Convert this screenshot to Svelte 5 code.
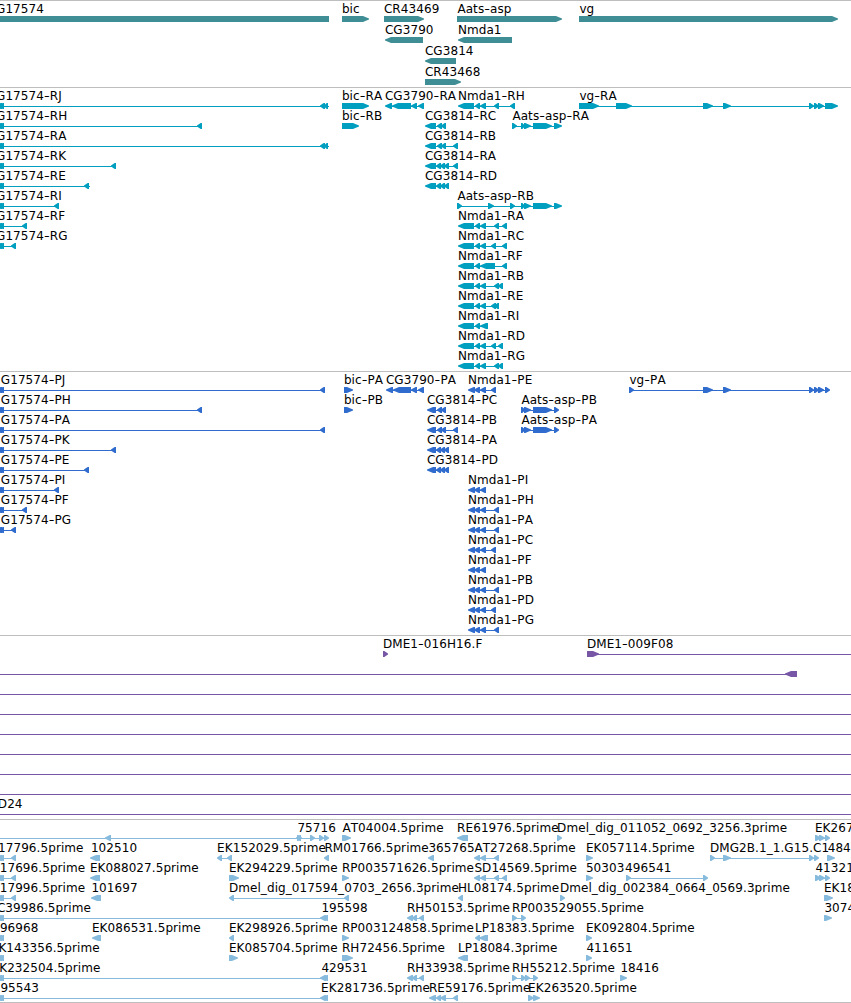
<script lang="ts">
    type Exon = [number, number];

    interface Feature {
        row: number;
        x: number;
        label: string;
        dir: number;
        exons: Exon[];
        line: Exon;
    }

    interface Track {
        name: string;
        color: string;
        height: number;
        pitch: number;
        features: Feature[];
    }

    // dir is 1 for the forward strand and -1 for the reverse strand
    const f = (row: number, x: number, label: string, dir: number, exons: Exon[], line?: Exon): Feature => ({
        row, x, label, dir, exons,
        line: line ?? [exons[0][0] + 1, exons[exons.length - 1][1] - 1]
    });

    const edge: Exon[] = [[-4, 2], [-1, 4]];
    const nmda: Exon[] = [[458, 474], [475, 480], [480, 486]];
    const nmdaP: Exon[] = [[468, 475], [474, 480], [480, 486]];
    const cg: Exon[] = [[425, 436], [437, 442], [441, 446]];
    const cgLong: Exon[] = [[425, 436], [436, 441], [440, 445], [444, 449]];
    const cgP: Exon[] = [[427, 436], [437, 442], [441, 446]];
    const cgPLong: Exon[] = [[427, 436], [436, 441], [440, 445], [444, 449]];
    const aats: Exon[] = [[521, 525], [524, 531], [533, 552]];
    const vgTail: Exon[] = [[703, 713], [723, 731], [809, 814], [814, 819], [818, 824]];
    const farEnd: Exon[] = [[320, 326], [324, 328]];

    const tracks: Track[] = [
        {
            name: "genes", color: "#408e95", height: 87, pitch: 21,
            features: [
                f(0, -4.4, "G17574", -1, [[-10, 329]]),
                f(0, 341.5, "bic", 1, [[342, 369]]),
                f(0, 383.5, "CR43469", 1, [[384, 424]]),
                f(0, 457, "Aats-asp", 1, [[457, 562]]),
                f(0, 579, "vg", 1, [[579, 838]]),
                f(1, 384.5, "CG3790", -1, [[385, 423]]),
                f(1, 457.5, "Nmda1", -1, [[458, 512]]),
                f(2, 424.5, "CG3814", -1, [[425, 456]]),
                f(3, 424.5, "CR43468", 1, [[425, 461]])
            ]
        },
        {
            name: "transcripts", color: "#009fbf", height: 284, pitch: 20,
            features: [
                f(0, -4.4, "G17574-RJ", -1, [...edge, [320, 325], [324, 328]], [0, 329]),
                f(1, -4.4, "G17574-RH", -1, [...edge, [197, 202]]),
                f(2, -4.4, "G17574-RA", -1, [...edge, [320, 325], [324, 328]], [0, 329]),
                f(3, -4.4, "G17574-RK", -1, [...edge, [111, 116]]),
                f(4, -4.4, "G17574-RE", -1, [...edge, [84, 89]], [0, 90]),
                f(5, -4.4, "G17574-RI", -1, [...edge, [54, 59]]),
                f(6, -4.4, "G17574-RF", -1, [...edge, [22, 27]]),
                f(7, -4.4, "G17574-RG", -1, [...edge, [11, 16]]),
                f(0, 341.5, "bic-RA", 1, [[342, 369]]),
                f(1, 341.5, "bic-RB", 1, [[342, 359]]),
                f(0, 384.5, "CG3790-RA", -1, [[385, 392], [392, 411], [411, 417], [418, 424]]),
                f(0, 457.5, "Nmda1-RH", -1, [...nmda, [494, 499], [510, 515]]),
                f(1, 424.5, "CG3814-RC", -1, cg),
                f(2, 424.5, "CG3814-RB", -1, [...cg, [453, 458]]),
                f(3, 424.5, "CG3814-RA", -1, [...cgLong, [453, 458]]),
                f(4, 424.5, "CG3814-RD", -1, cgLong),
                f(1, 512, "Aats-asp-RA", 1, [[512, 517], ...aats, [554, 562]]),
                f(0, 579, "vg-RA", 1, [[579, 599], [616, 632], ...vgTail, [825, 838]]),
                f(5, 457, "Aats-asp-RB", 1, [[457, 462], [488, 494], [510, 515], ...aats, [554, 562]]),
                f(6, 457.5, "Nmda1-RA", -1, [...nmda, [494, 499], [502, 507]]),
                f(7, 457.5, "Nmda1-RC", -1, [...nmda, [491, 496], [502, 507]]),
                f(8, 457.5, "Nmda1-RF", -1, [[458, 474], [475, 480], [480, 495], [502, 507]]),
                f(9, 457.5, "Nmda1-RB", -1, [...nmda, [494, 499], [498, 503]]),
                f(10, 457.5, "Nmda1-RE", -1, [...nmda, [491, 496], [494, 499]]),
                f(11, 457.5, "Nmda1-RI", -1, [[458, 474], [475, 480], [480, 488]]),
                f(12, 457.5, "Nmda1-RD", -1, [...nmda, [491, 496], [498, 503]]),
                f(13, 457.5, "Nmda1-RG", -1, [...nmda, [494, 499], [498, 503]])
            ]
        },
        {
            name: "proteins", color: "#306ccd", height: 264, pitch: 20,
            features: [
                f(0, 0.4, "G17574-PJ", -1, [...edge, [320, 325]]),
                f(1, 0.4, "G17574-PH", -1, [...edge, [197, 202]]),
                f(2, 0.4, "G17574-PA", -1, [...edge, [320, 325]]),
                f(3, 0.4, "G17574-PK", -1, [...edge, [111, 116]]),
                f(4, 0.4, "G17574-PE", -1, [...edge, [84, 89]]),
                f(5, 0.4, "G17574-PI", -1, [...edge, [54, 59]]),
                f(6, 0.4, "G17574-PF", -1, [...edge, [22, 27]]),
                f(7, 0.4, "G17574-PG", -1, [...edge, [11, 16]]),
                f(0, 343.5, "bic-PA", 1, [[344, 353]]),
                f(1, 343.5, "bic-PB", 1, [[344, 353]]),
                f(0, 385.5, "CG3790-PA", -1, [[386, 393], [393, 411], [411, 417], [418, 424]]),
                f(0, 467.5, "Nmda1-PE", -1, [...nmdaP, [491, 496]]),
                f(1, 426.5, "CG3814-PC", -1, cgP),
                f(2, 426.5, "CG3814-PB", -1, [...cgP, [453, 458]]),
                f(3, 426.5, "CG3814-PA", -1, cgPLong),
                f(4, 426.5, "CG3814-PD", -1, cgPLong),
                f(1, 521, "Aats-asp-PB", 1, [...aats, [554, 559]]),
                f(2, 521, "Aats-asp-PA", 1, [...aats, [554, 559]]),
                f(5, 467.5, "Nmda1-PI", -1, nmdaP),
                f(6, 467.5, "Nmda1-PH", -1, [...nmdaP, [494, 499]]),
                f(7, 467.5, "Nmda1-PA", -1, [...nmdaP, [494, 499]]),
                f(8, 467.5, "Nmda1-PC", -1, [...nmdaP, [491, 496]]),
                f(9, 467.5, "Nmda1-PF", -1, nmdaP),
                f(10, 467.5, "Nmda1-PB", -1, [...nmdaP, [494, 499]]),
                f(11, 467.5, "Nmda1-PD", -1, [...nmdaP, [491, 496]]),
                f(12, 467.5, "Nmda1-PG", -1, [...nmdaP, [494, 499]]),
                f(0, 629, "vg-PA", 1, [[629, 634], ...vgTail, [825, 830]])
            ]
        },
        {
            name: "clones", color: "#7656a5", height: 184, pitch: 20,
            features: [
                f(0, 382.5, "DME1-016H16.F", 1, [[383, 388]]),
                f(0, 586.5, "DME1-009F08", 1, [[587, 599]], [588, 851]),
                f(1, 0, "", -1, [[785, 797]], [0, 796]),
                ...[2, 3, 4, 5, 6, 7].map((row) => f(row, 0, "", 1, [], [0, 851])),
                f(8, -2.6, "D24", 1, [], [0, 851])
            ]
        },
        {
            name: "ests", color: "#87bbdd", height: 183, pitch: 20,
            features: [
                f(0, 0, "", -1, [[105, 111], [296, 301]], [0, 301]),
                f(0, 297, "75716", 1, [[297, 302], [310, 315], [319, 324], [324, 329]]),
                f(0, 342, "AT04004.5prime", 1, [[342, 351]]),
                f(0, 456.7, "RE61976.5prime", -1, [[457, 468]]),
                f(0, 556.7, "Dmel_dig_011052_0692_3256.3prime", 1, [[557, 562]]),
                f(0, 814.5, "EK267", 1, [[815, 821], [819, 825], [825, 830]]),

                f(1, -2.4, "17796.5prime", -1, [...edge, [11, 16]]),
                f(1, 90.5, "102510", -1, [[90, 100]]),
                f(1, 216.7, "EK152029.5prime", -1, [[217, 222], [227, 232]]),
                f(1, 324, "RM01766.5prime", -1, [[324, 329]]),
                f(1, 428, "365765", -1, [[428, 434]]),
                f(1, 474, "AT27268.5prime", -1, [[474, 480], [480, 486], [494, 499]]),
                f(1, 585.5, "EK057114.5prime", 1, [[586, 593]]),
                f(1, 709.5, "DMG2B.1_1.G15.C1", 1, [[710, 715], [723, 731], [809, 814], [814, 819]]),
                f(1, 827.3, "484", 1, [[827, 835]]),

                f(2, -0.7, "17696.5prime", -1, [...edge, [11, 16]]),
                f(2, 89.5, "EK088027.5prime", -1, [[90, 100]]),
                f(2, 228.5, "EK294229.5prime", 1, [[229, 239]]),
                f(2, 341.5, "RP003571626.5prime", 1, [[342, 349]]),
                f(2, 474, "SD14569.5prime", -1, [[474, 480], [480, 486], [494, 499], [502, 507]]),
                f(2, 585.5, "50303", 1, [[586, 593]]),
                f(2, 624.7, "496541", 1, [[626, 631], [703, 708]]),
                f(2, 815, "41321", 1, [[815, 821], [819, 825], [825, 830]]),

                f(3, -0.7, "17996.5prime", -1, [...edge, [11, 16]]),
                f(3, 91, "101697", -1, [[91, 101]]),
                f(3, 228.5, "Dmel_dig_017594_0703_2656.3prime", -1, [[229, 234], [344, 349]]),
                f(3, 457.5, "HL08174.5prime", -1, [[458, 463]]),
                f(3, 559.5, "Dmel_dig_002384_0664_0569.3prime", 1, [[560, 565]]),
                f(3, 823.5, "EK18", 1, [[824, 833]]),

                f(4, -3.5, "C39986.5prime", -1, [...edge, ...farEnd]),
                f(4, 321, "195598", 1, [], [0, 0]),
                f(4, 406.5, "RH50153.5prime", -1, [[407, 413], [412, 417], [419, 424]]),
                f(4, 511.5, "RP003529055.5prime", 1, [[512, 517], [521, 526]]),
                f(4, 824, "3074", 1, [[824, 832]]),

                f(5, -0.5, "96968", -1, edge),
                f(5, 91.5, "EK086531.5prime", -1, [[92, 101]]),
                f(5, 228.5, "EK298926.5prime", -1, [[229, 234]]),
                f(5, 341.5, "RP003124858.5prime", 1, [[342, 349]]),
                f(5, 474.5, "LP18383.5prime", -1, [[475, 480], [479, 488]]),
                f(5, 585.5, "EK092804.5prime", 1, [[586, 592]]),

                f(6, -2, "K143356.5prime", -1, edge),
                f(6, 228.5, "EK085704.5prime", 1, [[229, 238]]),
                f(6, 341.5, "RH72456.5prime", 1, [[342, 353]]),
                f(6, 457.5, "LP18084.3prime", -1, [[458, 468]]),
                f(6, 586, "411651", 1, [[586, 592]]),

                f(7, -1.2, "K232504.5prime", -1, [...edge, ...farEnd]),
                f(7, 321, "429531", 1, [], [0, 0]),
                f(7, 406.5, "RH33938.5prime", -1, [[407, 413], [412, 417], [419, 424]]),
                f(7, 511.5, "RH55212.5prime", 1, [[512, 517], [521, 526], [525, 530], [533, 538]]),
                f(7, 620, "18416", 1, [[620, 627]]),

                f(8, 0, "95543", -1, [...edge, ...farEnd]),
                f(8, 320.7, "EK281736.5prime", 1, [], [0, 0]),
                f(8, 428.5, "RE59176.5prime", -1, [[429, 436], [436, 441], [440, 446], [453, 458]]),
                f(8, 527.7, "EK263520.5prime", 1, [[528, 534], [533, 540]])
            ]
        }
    ];

    // block with a pointed end on the side the feature is read towards
    const arrow = ([a, b]: Exon, dir: number, y: number) => {
        const head = Math.min(6, b - a - 1.3);
        return dir > 0
            ? `${a},${y} ${b - head},${y} ${b},${y + 2.4} ${b},${y + 3.6} ${b - head},${y + 6} ${a},${y + 6}`
            : `${b},${y} ${a + head},${y} ${a},${y + 2.4} ${a},${y + 3.6} ${a + head},${y + 6} ${b},${y + 6}`;
    }

    // keeps the hyphens as pieces of their own
    const pieces = (label: string) => label.split(/(-)/);
</script>

<main>
    {#each tracks as track}
        <section class="track">
            <svg width="851" height={track.height - 1} fill={track.color} aria-label={track.name}>
                {#each track.features as item}
                    {@const top = item.row * track.pitch}
                    <rect x={item.line[0]} y={top + 18} width={item.line[1] - item.line[0]} height="1" />
                    {#each item.exons as exon}
                        <polygon points={arrow(exon, item.dir, top + 15)} />
                    {/each}
                {/each}
                {#each track.features as item}
                    {#if item.label}
                        <text x={item.x + 0.4} y={item.row * track.pitch + 12}>{#each pieces(item.label) as piece}{#if piece === "-"}<tspan textLength="5.8" lengthAdjust="spacingAndGlyphs">-</tspan>{:else}<tspan>{piece}</tspan>{/if}{/each}</text>
                    {/if}
                {/each}
            </svg>
        </section>
    {/each}
</main>

<style>
    :global(body) {
        margin: 0;
        background: #fff;
    }

    main {
        width: 851px;
        overflow: hidden;
        border-bottom: 1px solid #bebebe;
    }

    .track {
        border-top: 1px solid #bebebe;
    }

    svg {
        display: block;
        overflow: hidden;
    }

    rect {
        shape-rendering: crispEdges;
    }

    text {
        font-family: "DejaVu Sans", sans-serif;
        font-size: 12px;
        font-kerning: none;
        letter-spacing: 0.08px;
        fill: #000;
    }
</style>
